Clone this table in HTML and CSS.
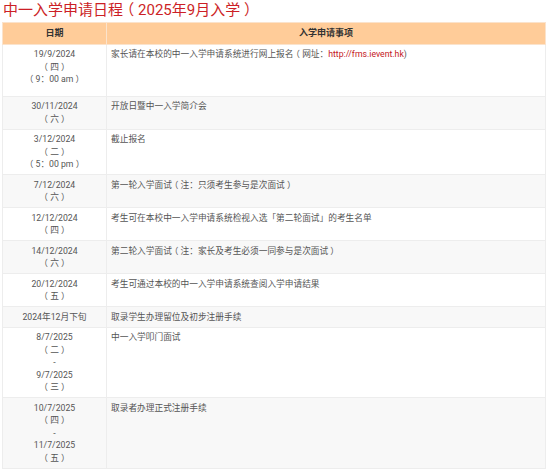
FILE: index.html
```html
<!DOCTYPE html>
<html lang="zh-Hans">
<head>
<meta charset="utf-8">
<title>中一入学申请日程</title>
<link rel="stylesheet" href="styles.css">
</head>
<body>
<h1 class="title">中一入学申请日程<span class="po">（</span>2025年9月入学<span class="pc">）</span></h1>
<table class="schedule">
  <thead>
    <tr><th class="col-date">日期</th><th>入学申请事项</th></tr>
  </thead>
  <tbody>
    <tr class="first">
      <td class="date">19/9/2024<br><span class="po">（</span>四<span class="pc">）</span><br><span class="po">（</span>9：00 am<span class="pc">）</span></td>
      <td>家长请在本校的中一入学申请系统进行网上报名<span class="po">（</span>网址：<a class="link" href="#">http://fms.ievent.hk</a>)</td>
    </tr>
    <tr>
      <td class="date">30/11/2024<br><span class="po">（</span>六<span class="pc">）</span></td>
      <td>开放日暨中一入学简介会</td>
    </tr>
    <tr>
      <td class="date">3/12/2024<br><span class="po">（</span>二<span class="pc">）</span><br><span class="po">（</span>5：00 pm<span class="pc">）</span></td>
      <td>截止报名</td>
    </tr>
    <tr>
      <td class="date">7/12/2024<br><span class="po">（</span>六<span class="pc">）</span></td>
      <td>第一轮入学面试<span class="po">（</span>注：只须考生参与是次面试<span class="pc">）</span></td>
    </tr>
    <tr>
      <td class="date">12/12/2024<br><span class="po">（</span>四<span class="pc">）</span></td>
      <td>考生可在本校中一入学申请系统检视入选「第二轮面试」的考生名单</td>
    </tr>
    <tr>
      <td class="date">14/12/2024<br><span class="po">（</span>六<span class="pc">）</span></td>
      <td>第二轮入学面试<span class="po">（</span>注：家长及考生必须一同参与是次面试<span class="pc">）</span></td>
    </tr>
    <tr>
      <td class="date">20/12/2024<br><span class="po">（</span>五<span class="pc">）</span></td>
      <td>考生可通过本校的中一入学申请系统查阅入学申请结果</td>
    </tr>
    <tr>
      <td class="date">2024年12月下旬</td>
      <td>取录学生办理留位及初步注册手续</td>
    </tr>
    <tr>
      <td class="date">8/7/2025<br><span class="po">（</span>二<span class="pc">）</span><br>-<br>9/7/2025<br><span class="po">（</span>三<span class="pc">）</span></td>
      <td>中一入学叩门面试</td>
    </tr>
    <tr>
      <td class="date">10/7/2025<br><span class="po">（</span>四<span class="pc">）</span><br>-<br>11/7/2025<br><span class="po">（</span>五<span class="pc">）</span></td>
      <td>取录者办理正式注册手续</td>
    </tr>
  </tbody>
</table>
</body>
</html>
```
FILE: styles.css
```css
html, body {
  margin: 0;
  padding: 0;
  background: #fff;
}
body {
  padding: 0 2px;
  font-family: Roboto, "Noto Sans CJK SC", sans-serif;
  color: #555;
}
.title {
  margin: 0;
  padding: 0 0 0 1px;
  height: 22px;
  font-size: 15px;
  line-height: 20px;
  font-weight: normal;
  color: #cc1f26;
}
.po,
.pc {
  font-feature-settings: "halt" 1;
  margin: 0 0.25em;
}
.schedule {
  width: 544px;
  border-collapse: collapse;
  font-size: 8.7px;
  line-height: 12.5px;
}
.schedule th {
  background: #ffcc99;
  color: #333;
  font-weight: bold;
  font-size: 9px;
  padding: 4px 4px;
  border: 1px solid #fbe3cc;
  text-align: center;
  height: 12px;
}
.schedule .col-date {
  width: 95px;
}
.schedule td {
  border: 1px solid #ededed;
  padding: 3.5px 4px;
  vertical-align: top;
  text-align: left;
}
.schedule td.date {
  text-align: center;
  font-family: Roboto, "Noto Sans CJK TC", sans-serif;
}
.schedule tbody tr:nth-child(even) td {
  background: #f8f8f8;
}
.schedule tr.first td {
  padding-bottom: 10px;
}
.link {
  color: #c4161c;
  text-decoration: none;
}
```
